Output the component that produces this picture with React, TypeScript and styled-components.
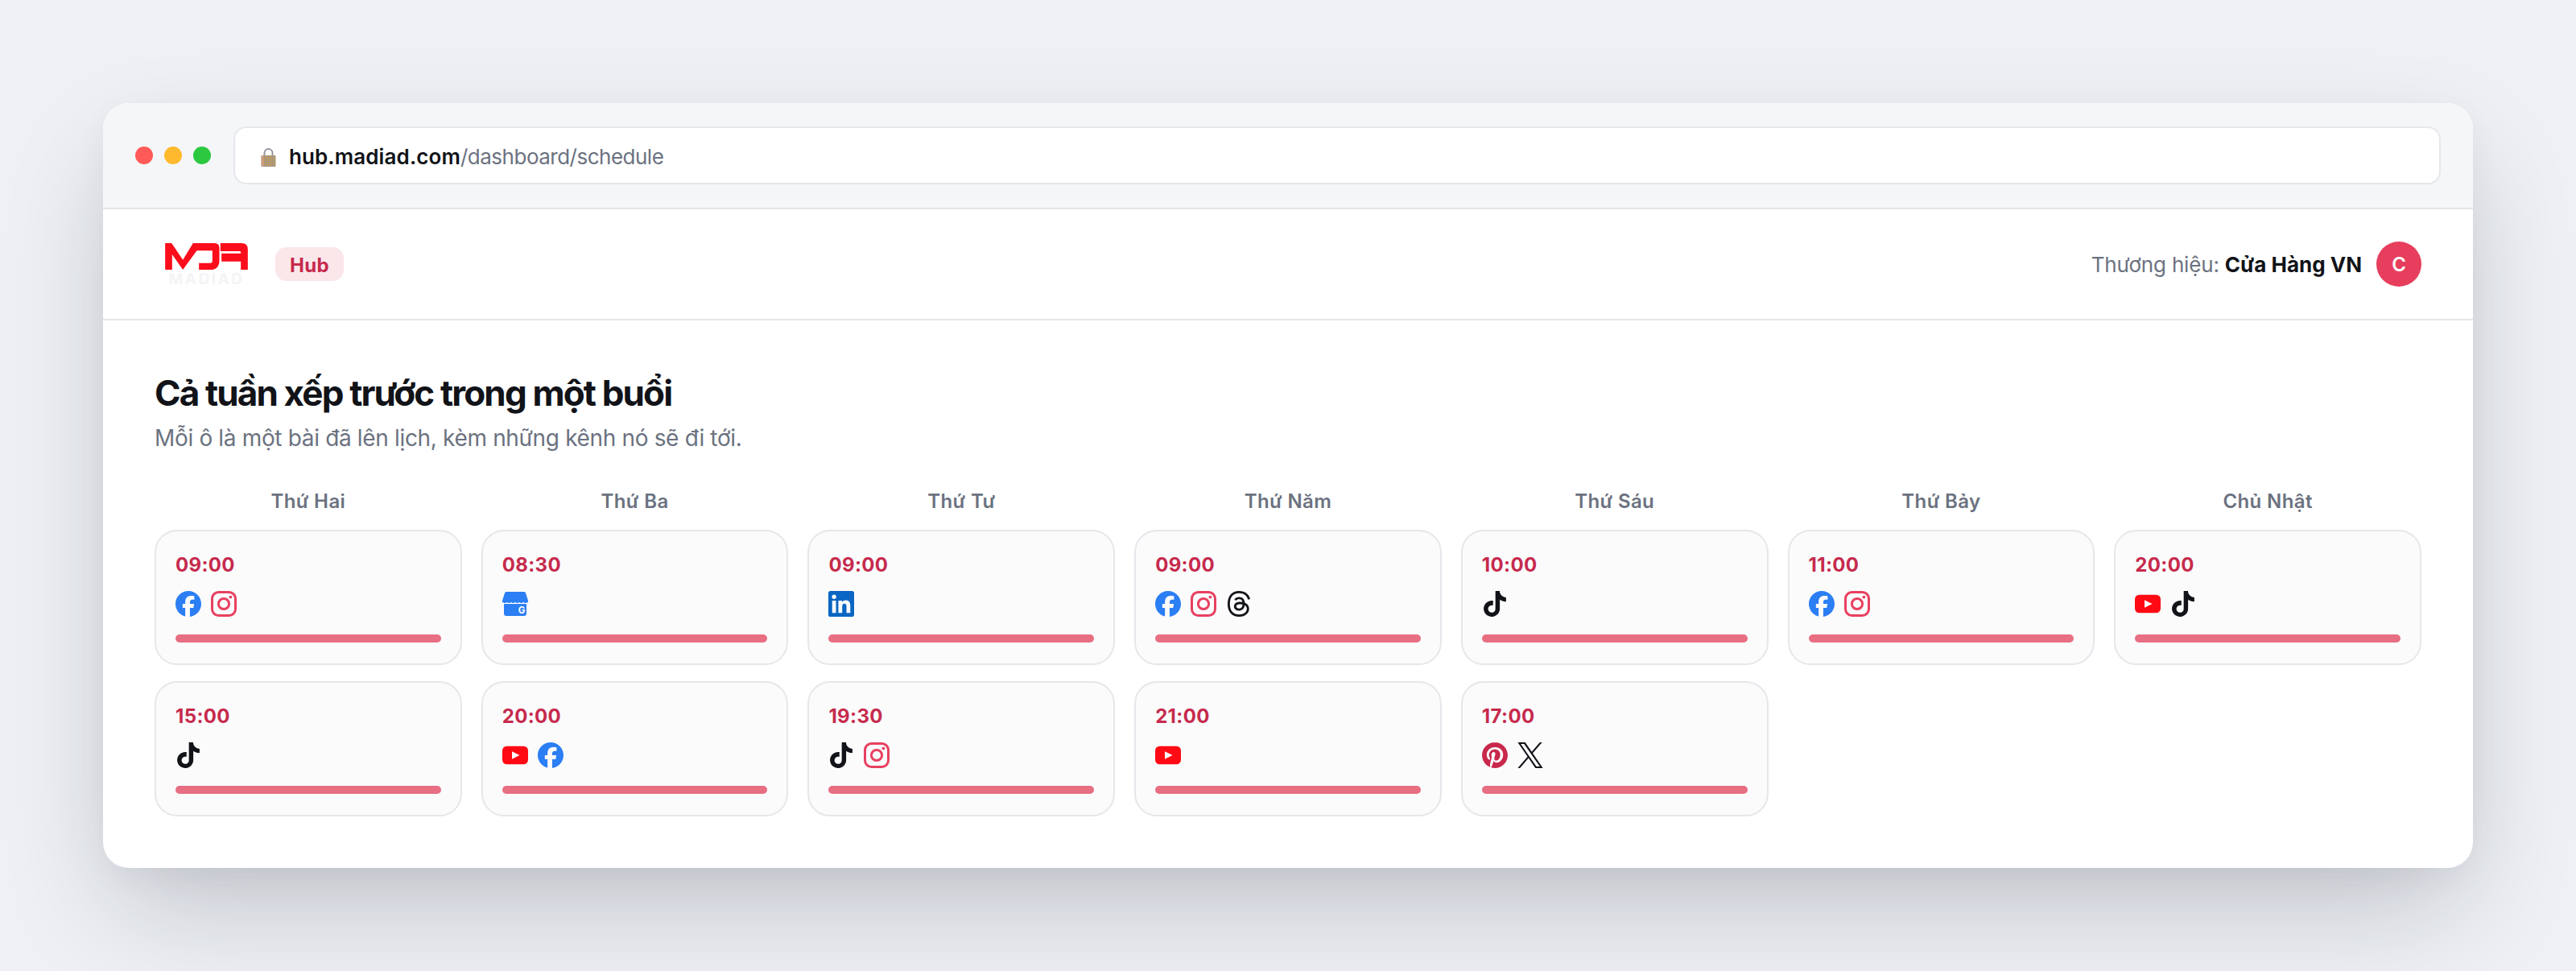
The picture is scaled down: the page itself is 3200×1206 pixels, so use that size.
import styled, { createGlobalStyle } from "styled-components";
import { SiFacebook, SiLinkedin, SiPinterest, SiThreads, SiTiktok } from "react-icons/si";

const GlobalStyle = createGlobalStyle`
  * { box-sizing: border-box; }
  html, body { margin: 0; padding: 0; background: #eef0f4; }
  body { font-family: Inter, "Noto Sans", sans-serif; -webkit-font-smoothing: antialiased; }
`;

type Channel = "facebook" | "instagram" | "threads" | "tiktok" | "youtube" | "linkedin" | "pinterest" | "x" | "gbp";
type Post = { time: string; channels: Channel[] };
type Day = { name: string; posts: Post[] };

const week: Day[] = [
  { name: "Thứ Hai", posts: [
    { time: "09:00", channels: ["facebook", "instagram"] },
    { time: "15:00", channels: ["tiktok"] },
  ] },
  { name: "Thứ Ba", posts: [
    { time: "08:30", channels: ["gbp"] },
    { time: "20:00", channels: ["youtube", "facebook"] },
  ] },
  { name: "Thứ Tư", posts: [
    { time: "09:00", channels: ["linkedin"] },
    { time: "19:30", channels: ["tiktok", "instagram"] },
  ] },
  { name: "Thứ Năm", posts: [
    { time: "09:00", channels: ["facebook", "instagram", "threads"] },
    { time: "21:00", channels: ["youtube"] },
  ] },
  { name: "Thứ Sáu", posts: [
    { time: "10:00", channels: ["tiktok"] },
    { time: "17:00", channels: ["pinterest", "x"] },
  ] },
  { name: "Thứ Bảy", posts: [{ time: "11:00", channels: ["facebook", "instagram"] }] },
  { name: "Chủ Nhật", posts: [{ time: "20:00", channels: ["youtube", "tiktok"] }] },
];

function InstagramIcon() {
  return (
    <svg width="32" height="32" viewBox="0 0 32 32" fill="none">
      <rect x="1.5" y="1.5" width="29" height="29" rx="8" stroke="#e8405f" strokeWidth="3" />
      <circle cx="16" cy="16" r="6.6" stroke="#e8405f" strokeWidth="3" />
      <circle cx="24.4" cy="7.6" r="1.9" fill="#e8405f" />
    </svg>
  );
}

function YoutubeIcon() {
  return (
    <svg width="32" height="32" viewBox="0 0 32 32">
      <rect x="0" y="4.700" width="32" height="22.600" rx="5.500" fill="#ff0a14" />
      <path d="M12 11.200 21.500 16 12 20.800Z" fill="#fff" />
    </svg>
  );
}

function XIcon() {
  return (
    <svg width="32" height="32" viewBox="0 0 1200 1227" fill="#111318">
      <path d="M714.163 519.284L1160.89 0H1055.03L667.137 450.887L357.328 0H0L468.492 681.821L0 1226.37H105.866L515.491 750.218L842.672 1226.37H1200L714.137 519.284H714.163ZM569.165 687.828L521.697 619.934L144.011 79.6944H306.615L611.412 515.685L658.88 583.579L1055.08 1150.3H892.476L569.165 687.854V687.828Z" />
    </svg>
  );
}

function BusinessIcon() {
  return (
    <svg width="32" height="32" viewBox="0 0 32 32">
      <path d="M5 1h22q1.600 0 2 1.500L32 12v1.500q0 1.500-2 1.500H2q-2 0-2-1.500V12L3 2.500Q3.400 1 5 1Z" fill="#2b7ef3" />
      <path d="M2 16h28v12q0 3-3 3H5q-3 0-3-3Z" fill="#2b7ef3" />
      <path d="M1 14.500q2.500 2.500 5 0q2.500 2.500 5 0q2.500 2.500 5 0q2.500 2.500 5 0q2.500 2.500 5 0q2.500 2.500 5 0" fill="none" stroke="#fff" strokeWidth="1" />
      <text x="24" y="28" textAnchor="middle" fontFamily="Inter, sans-serif" fontWeight="700" fontSize="11.500" fill="#fff">G</text>
    </svg>
  );
}

function ChannelIcon({ channel }: { channel: Channel }) {
  switch (channel) {
    case "facebook": return <SiFacebook size={32} color="#2b7ef3" />;
    case "instagram": return <InstagramIcon />;
    case "threads": return <SiThreads size={32} color="#111318" />;
    case "tiktok": return <SiTiktok size={32} color="#111318" />;
    case "youtube": return <YoutubeIcon />;
    case "linkedin": return <SiLinkedin size={32} color="#0a66c2" />;
    case "pinterest": return <SiPinterest size={32} color="#c8284b" />;
    case "x": return <XIcon />;
    case "gbp": return <BusinessIcon />;
  }
}

function LockIcon() {
  return (
    <svg width="19" height="24" viewBox="0 0 19 24">
      <defs>
        <pattern id="lockDots" width="3" height="3" patternUnits="userSpaceOnUse">
          <rect width="3" height="3" fill="#9e9488" />
          <rect width="1.500" height="1.500" fill="#eaa52a" />
        </pattern>
      </defs>
      <path d="M4.500 11V7a5 5 0 0 1 10 0v4" fill="none" stroke="#94979c" strokeWidth="2" />
      <rect x="0.500" y="10" width="18" height="14" rx="1" fill="url(#lockDots)" />
      <rect x="0.500" y="10" width="3" height="14" fill="#d99f93" opacity="0.7" />
    </svg>
  );
}

function BrandMark() {
  return (
    <svg width="103" height="33" viewBox="0 0 308 99" fill="#fc0d1b">
      <path d="M0 0H24L66 62L104 0H184Q202 0 202 18V62Q202 99 170 99H126V74H170Q176 74 176 66V28H118L66 99L26 42V99H0Z" />
      <path d="M206 0H284Q308 0 308 22V99H282V68H210V38H282V34Q282 30 276 30H206Z" />
    </svg>
  );
}

export default function App() {
  return (
    <>
      <GlobalStyle />
      <Page>
        <Window>
          <ChromeBar>
            <Lights>
              <Light $color="#ff5a57" />
              <Light $color="#ffb92e" />
              <Light $color="#2bc840" />
            </Lights>
            <AddressBar>
              <LockIcon />
              <Address><b>hub.madiad.com</b>/dashboard/schedule</Address>
            </AddressBar>
          </ChromeBar>

          <Header>
            <LogoGroup>
              <Logo>
                <BrandMark />
                <LogoWord>MADIAD</LogoWord>
              </Logo>
              <HubBadge>Hub</HubBadge>
            </LogoGroup>
            <BrandGroup>
              <BrandLabel>Thương hiệu: <b>Cửa Hàng VN</b></BrandLabel>
              <Avatar>C</Avatar>
            </BrandGroup>
          </Header>

          <Main>
            <Title>Cả tuần xếp trước trong một buổi</Title>
            <Subtitle>Mỗi ô là một bài đã lên lịch, kèm những kênh nó sẽ đi tới.</Subtitle>
            <WeekGrid>
              {week.map((day) => (
                <DayColumn key={day.name}>
                  <DayName>{day.name}</DayName>
                  {day.posts.map((post) => (
                    <PostCard key={post.time}>
                      <PostTime>{post.time}</PostTime>
                      <ChannelRow>
                        {post.channels.map((channel) => (
                          <ChannelIcon key={channel} channel={channel} />
                        ))}
                      </ChannelRow>
                      <ProgressBar />
                    </PostCard>
                  ))}
                </DayColumn>
              ))}
            </WeekGrid>
          </Main>
        </Window>
      </Page>
    </>
  );
}

const Page = styled.div`
  height: 1206px;
  padding: 128px;
  background: #eef0f4;
`;

const Window = styled.div`
  height: 950px;
  border-radius: 32px;
  background: #ffffff;
  overflow: hidden;
  box-shadow: 0 60px 140px -20px rgba(17, 24, 39, 0.22), 0 12px 40px rgba(17, 24, 39, 0.04);
`;

const ChromeBar = styled.div`
  display: flex;
  align-items: center;
  gap: 28px;
  height: 132px;
  padding: 0 40px;
  background: #f5f6f8;
  border-bottom: 2px solid #e5e7eb;
`;

const Lights = styled.div`
  display: flex;
  gap: 14px;
`;

const Light = styled.span<{ $color: string }>`
  width: 22px;
  height: 22px;
  border-radius: 50%;
  background: ${(props) => props.$color};
`;

const AddressBar = styled.div`
  flex: 1;
  display: flex;
  align-items: center;
  gap: 16px;
  height: 72px;
  padding: 3px 32px 0;
  background: #ffffff;
  border: 2px solid #e5e7eb;
  border-radius: 16px;
`;

const Address = styled.span`
  font-size: 26px;
  letter-spacing: -0.5px;
  color: #6b7280;

  & > b {
    font-weight: 600;
    letter-spacing: 0.1px;
    color: #111318;
  }
`;

const Header = styled.header`
  display: flex;
  align-items: center;
  justify-content: space-between;
  height: 138px;
  padding: 0 64px;
  border-bottom: 2px solid #e5e7eb;
`;

const LogoGroup = styled.div`
  display: flex;
  align-items: center;
  gap: 34px;
  padding-left: 13px;
`;

const Logo = styled.div`
  display: flex;
  flex-direction: column;
  align-items: center;
  gap: 5px;
`;

const LogoWord = styled.span`
  font-size: 19px;
  line-height: 14px;
  font-weight: 700;
  letter-spacing: 2.5px;
  color: #f3f4f6;
`;

const HubBadge = styled.span`
  display: flex;
  align-items: center;
  height: 42px;
  padding: 2px 18px 0;
  border-radius: 14px;
  background: #fbe6ea;
  color: #c62a4c;
  font-size: 24px;
  font-weight: 700;
  letter-spacing: 0.3px;
`;

const BrandGroup = styled.div`
  display: flex;
  align-items: center;
  gap: 18px;
`;

const BrandLabel = styled.span`
  font-size: 26px;
  letter-spacing: -0.18px;
  color: #6b7280;

  & > b {
    font-weight: 700;
    letter-spacing: 0;
    color: #111318;
  }
`;

const Avatar = styled.span`
  display: flex;
  align-items: center;
  justify-content: center;
  width: 56px;
  height: 56px;
  border-radius: 50%;
  background: #e63e5c;
  color: #ffffff;
  font-size: 24px;
  font-weight: 600;
`;

const Main = styled.main`
  padding: 64px 64px 0;
`;

const Title = styled.h1`
  margin: 0;
  font-size: 44px;
  line-height: 52px;
  font-weight: 700;
  letter-spacing: -1.85px;
  color: #111318;
`;

const Subtitle = styled.p`
  margin: 12px 0 0;
  font-size: 28px;
  line-height: 36px;
  letter-spacing: -0.34px;
  color: #6b7280;
`;

const WeekGrid = styled.div`
  display: grid;
  grid-template-columns: repeat(7, 1fr);
  gap: 24px;
  margin-top: 45px;
`;

const DayColumn = styled.div`
  display: flex;
  flex-direction: column;
  gap: 20px;
`;

const DayName = styled.div`
  margin-bottom: -1px;
  text-align: center;
  font-size: 24px;
  line-height: 32px;
  font-weight: 600;
  letter-spacing: 0.4px;
  color: #6b7280;
`;

const PostCard = styled.div`
  height: 168px;
  padding: 26px 24px;
  background: #fbfbfc;
  border: 2px solid #e5e7eb;
  border-radius: 28px;
`;

const PostTime = styled.div`
  padding-top: 1px;
  font-size: 24px;
  line-height: 29px;
  font-weight: 700;
  letter-spacing: 0.35px;
  color: #c62a4c;
`;

const ChannelRow = styled.div`
  display: flex;
  gap: 12px;
  margin-top: 18px;
`;

const ProgressBar = styled.div`
  height: 10px;
  margin-top: 22px;
  border-radius: 5px;
  background: #e86e82;
`;
